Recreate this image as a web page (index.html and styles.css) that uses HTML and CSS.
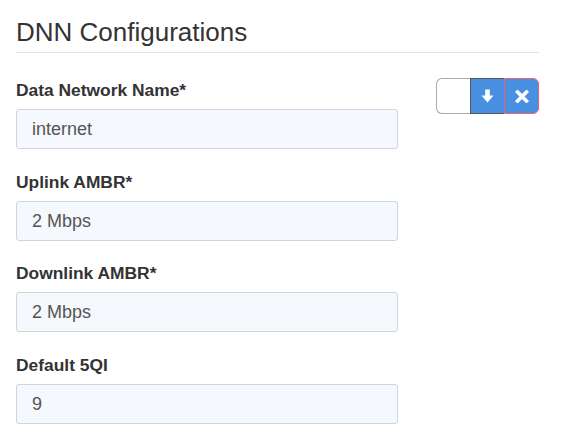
FILE: index.html
```html
<!DOCTYPE html>
<html>
<head>
<meta charset="utf-8">
<link rel="stylesheet" href="styles.css">
</head>
<body>
<div class="page">
  <h2 class="title">DNN Configurations</h2>
  <div class="content">
    <div class="fields">
      <div class="field">
        <label class="label">Data Network Name*</label>
        <div class="input">internet</div>
      </div>
      <div class="field">
        <label class="label">Uplink AMBR*</label>
        <div class="input">2 Mbps</div>
      </div>
      <div class="field">
        <label class="label">Downlink AMBR*</label>
        <div class="input">2 Mbps</div>
      </div>
      <div class="field">
        <label class="label">Default 5QI</label>
        <div class="input">9</div>
      </div>
    </div>
    <div class="btn-group">
      <div class="btn btn-blank"></div>
      <div class="btn btn-down">
        <svg width="13" height="14" viewBox="0 0 13 14"><path d="M4.2 0.5h4.6v6h3.7l-6 7-6-7h3.7z" fill="#fff"/></svg>
      </div>
      <div class="btn btn-del">
        <svg width="14" height="13" viewBox="0 0 14 13"><path d="M2.5 2l9 9M11.5 2l-9 9" stroke="#fff" stroke-width="3.6" stroke-linecap="square"/></svg>
      </div>
    </div>
  </div>
</div>
</body>
</html>
```
FILE: styles.css
```css
html, body {
  margin: 0;
  padding: 0;
  background: #fff;
}
body {
  font-family: "Liberation Sans", Arial, sans-serif;
  color: #333;
}
.page {
  width: 523px;
  padding: 0 0 0 16px;
}
.title {
  margin: 0;
  padding-top: 16px;
  font-size: 26px;
  font-weight: normal;
  line-height: 32px;
  padding-bottom: 4px;
  border-bottom: 1px solid #e3e3e3;
}
.content {
  display: flex;
  justify-content: space-between;
  align-items: flex-start;
  padding-top: 25px;
}
.fields {
  display: flex;
  flex-direction: column;
  gap: 21.5px;
  width: 382px;
  padding-top: 1px;
}
.field {
  display: flex;
  flex-direction: column;
  gap: 8px;
}
.label {
  font-size: 17.4px;
  font-weight: bold;
  line-height: 22px;
  color: #333;
}
.input {
  height: 38px;
  border: 1px solid #cfd5df;
  border-radius: 3px;
  background: #f5f8fc;
  font-size: 18px;
  line-height: 38px;
  padding-left: 15px;
  color: #555;
}
.btn-group {
  display: flex;
}
.btn {
  height: 36px;
  display: flex;
  align-items: center;
  justify-content: center;
  box-sizing: border-box;
}
.btn-blank {
  width: 34px;
  border: 1px solid #aaa;
  border-right: none;
  border-radius: 6px 0 0 6px;
  background: #fff;
}
.btn-down {
  width: 34px;
  background: #4a90e2;
  border: 1px solid #555;
  border-right: none;
}
.btn-del {
  width: 35px;
  background: #4a90e2;
  border: 1px solid #e8636b;
  border-radius: 0 6px 6px 0;
}
```
